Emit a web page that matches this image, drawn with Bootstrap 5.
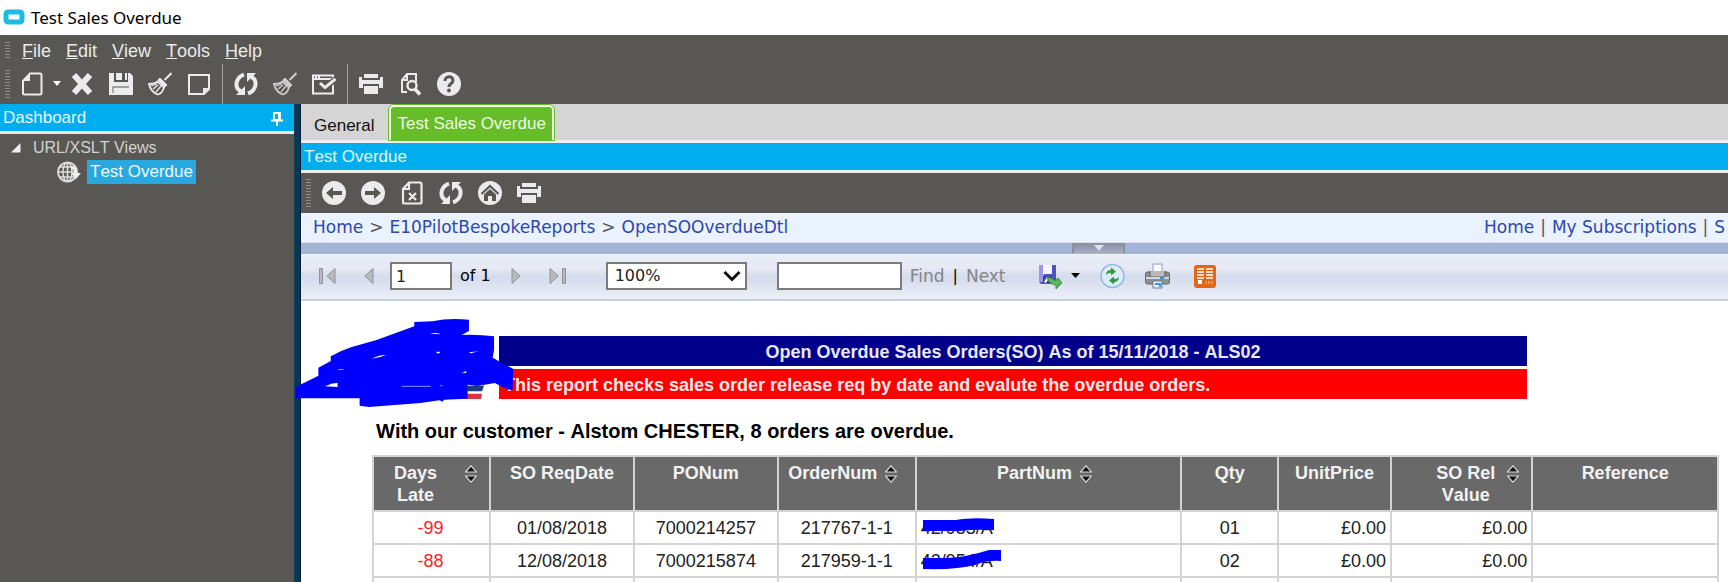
<!DOCTYPE html>
<html lang="en">
<head>
<meta charset="utf-8">
<meta name="viewport" content="width=device-width, initial-scale=1">
<title>Test Sales Overdue</title>
<link href="https://cdn.jsdelivr.net/npm/bootstrap@5.3.0/dist/css/bootstrap.min.css" rel="stylesheet">
<style>
:root{--slate:#585754;--azure:#00adef;--tip:#ebebeb}
body{font-family:"Liberation Sans",Arial,sans-serif;font-size:17px;line-height:20px;font-kerning:none;color:#000;background:#fff}
svg{display:block;flex:none}
.titlebar{height:35px;padding:0 0 0 3px;gap:6px;font:17px/36px "Noto Sans","Open Sans",sans-serif}
.titlebar h1{font:inherit;margin:0}
.chrome{background:var(--slate);color:var(--tip)}
.menubar{height:29px;padding:2px 0 0 5px;font-size:18px}
.menubar ul{padding-left:12px;gap:15px}
.menubar a{color:var(--tip);text-decoration:none}
.grip{width:5px;flex:none;background:repeating-linear-gradient(#8f8e8c 0 1px,transparent 1px 3px)}
.toolrow{height:40px;padding-left:5px}
.toolbtn{border:0;background:none;padding:0;width:24px;height:24px;color:var(--tip);flex:none}
.toolset{gap:15px;padding-left:11px}
.newgroup{gap:8px;margin-right:-6px}
.rule{width:1px;align-self:stretch;background:#a3a2a0;margin:0 -4px}
.sidebar{width:294px;background:var(--slate);flex:none}
.panelhead{height:30px;background:var(--azure);border-bottom:3px solid #ebebeb;color:#e9f6fd;padding:2px 3px 0;font-size:17px;margin:0;font-weight:400}
.divider{width:7px;flex:none;background:#033a5c;border-right:1px solid #001c2e;border-left:1px solid #17364a}
.tree{padding:2px 0 0 11px}
.tree .branch{color:#d2d2d0;gap:12px;height:24px;font-size:16px}
.tree .leaf{height:24px;gap:6px;padding-left:46px}
.tree a{background:#29a8e0;color:#f2faff;text-decoration:none;padding:0 3px;line-height:24px}
.tabstrip{height:39px;background:#d5d5d5;border-bottom:3px solid #f0f0f0;padding-left:13px;gap:15px}
.tabstrip button{border:0;background:none;padding:0;color:#111}
.tabstrip .current{color:#eefbe4;background:#66bc29;border:2px solid #f4fff0;border-bottom:0;border-radius:5px 5px 0 0;outline:1px solid #66bc29;padding:0 6px;height:35px;line-height:30px}
.crumbs{height:30px;background:#eaf2ff;border-bottom:1px solid #dde0ea;font:17px/29px "DejaVu Sans",sans-serif;padding-left:12px;color:#555}
.crumbs a{color:#2e47ad;text-decoration:none}
.crumbs>div{gap:6px}
.crumbs .right{width:244px;overflow:hidden}
.band{height:11px;background:#a4b4d7;padding-left:168px}
.fold{border:2px solid #8890a2;border-width:0 2px;background:linear-gradient(#868d9c,#a9afc0);width:53px;height:10px;padding:0}
.viewer{height:47px;border-top:1px solid #f4f3f0;border-bottom:2px solid #c6d1e8;background:linear-gradient(#e8edf6,#e7e9f4 30%,#d4dbeb 50%,#eaedf6 95%);padding:0 0 2px 14px;font:16px/20px "DejaVu Sans",sans-serif}
.viewer .box{height:28px;border:2px solid #7b7b7b;border-radius:0;background-color:#fff;padding:0 4px;font:16px/24px "DejaVu Sans",sans-serif;color:#222;flex:none}
.viewer select.box{appearance:none;width:141px;padding-left:7px;margin:0 30px 0 40px;background-image:url("data:image/svg+xml,%3Csvg xmlns='http://www.w3.org/2000/svg' width='18' height='12'%3E%3Cpath d='M1.500 2 9 9.500 16.500 2' fill='none' stroke='%23111' stroke-width='3'/%3E%3C/svg%3E");background-repeat:no-repeat;background-position:right 4px center}
.iconbtn{border:0;background:none;padding:0;flex:none}
.findbtn{border:0;background:none;padding:0;color:#858585;font-size:17px}
.report{padding:35px 9px 0 71px;font-size:18px}
.masthead{padding-right:192px}
.logo{width:127px;flex:none}
.bar{height:30px;color:#fff;font-weight:700;line-height:32px;font-size:18px}
.bar-title{background:#00008b;color:#e8e8f8;margin:0 0 3px}
.bar-note{background:red;padding-left:5px;color:#ffe9e9}
.scrawl{position:absolute;left:-6px;top:17px;width:220px;height:90px}
.headline{font-size:20px;font-weight:700;line-height:24px;margin:20px 0 12px 4px}
.orders{table-layout:fixed;width:100%;border-collapse:collapse}
.orders th,.orders td{border:2px solid #d3d3d3}
.orders th{background:#696969;color:#f2f2f2;height:55px;vertical-align:top;text-align:center;line-height:22px;padding:5px 4px 0}
.orders td{height:33px;padding:0 4px;line-height:30px;color:#222;text-align:center}
.orders td.num{text-align:right}
.orders td.late{color:#f22;padding-right:6px}
.orders td.part{text-align:left;position:relative}
.orders td.part svg{position:absolute;left:6px;top:4px}
.orders th>div{padding-right:8px}
.sorter{border:0;background:none;padding:3px 0 0;line-height:0}
</style>
</head>
<body class="vh-100 overflow-hidden d-flex flex-column">
<svg width="0" height="0" class="position-absolute" aria-hidden="true">
<symbol id="cycle" viewBox="0 0 24 24"><g fill="none" stroke="currentColor" stroke-width="4"><path d="M10 2.600C3 5 1 12 3.500 16.500L7 20"/><path d="M14 21.400c7-2.400 9-9.400 6.500-13.900L17 4"/></g><path fill="currentColor" d="M2 23h9V14zM22 1h-9v9z"/></symbol>
<symbol id="printer" viewBox="0 0 24 24"><g fill="currentColor"><path d="M5 2h14v4H5zM0 5h3v3h18V5h3v11h-4v-4H4v4H0z"/><path d="M5 14h14v8H5z"/></g></symbol>
<symbol id="broom" viewBox="0 0 24 24"><g fill="none" stroke="currentColor"><path d="m23.500 1-7 7" stroke-width="2"/><path d="m12 6 7 7-2 2-7-7z" fill="currentColor"/><path d="M9.500 9.500C7 12 4 12 1 12c1 5 4.500 9 9 10.500 3-1 5-3.500 6-7z" stroke-width="1.800"/><path d="m5 17 5-4M8 20l5-6M3 14l6-2" stroke-width="1.300"/></g></symbol>
<symbol id="sort" viewBox="0 0 12 18"><path d="M.5 7 6 .8 11.500 7zM.5 11 6 17.200 11.500 11z" fill="#111" stroke="#d8d8d8" stroke-width="1.200"/></symbol>
</svg>

<header class="titlebar d-flex flex-shrink-0">
<svg class="mt-2" width="22" height="18" viewBox="0 0 22 18"><rect x="3" y="4" width="16" height="10" rx="2" fill="#fff" stroke="#1fb9e6" stroke-width="5"/></svg>
<h1>Test Sales Overdue</h1>
</header>

<div class="chrome flex-shrink-0">
<nav class="menubar d-flex align-items-center"><span class="grip" style="height:17px"></span>
<ul class="list-unstyled d-flex mb-0">
<li><a href="#"><u>F</u>ile</a></li><li><a href="#"><u>E</u>dit</a></li><li><a href="#"><u>V</u>iew</a></li><li><a href="#"><u>T</u>ools</a></li><li><a href="#"><u>H</u>elp</a></li>
</ul></nav>
<div class="toolrow d-flex align-items-center"><span class="grip" style="height:29px"></span>
<div class="toolset d-flex align-items-center align-self-stretch">
<div class="newgroup d-flex align-items-center">
<button class="toolbtn" aria-label="New"><svg viewBox="0 0 24 24"><path d="M9 1.500h10c1 0 1.500.5 1.500 1.500v18c0 1-.5 1.500-1.500 1.500H3.500c-1 0-1.500-.5-1.500-1.500V9z" fill="none" stroke="currentColor" stroke-width="2"/><path d="M9 1.500V9H2z" fill="currentColor"/></svg></button>
<button class="iconbtn" aria-label="New options"><svg width="8" height="6" viewBox="0 0 8 6"><path d="M0 0h8L4 5z" fill="#fff"/></svg></button></div>
<button class="toolbtn" aria-label="Delete"><svg viewBox="0 0 24 24"><path d="m4 3 16 18M20 3 4 21" stroke="currentColor" stroke-width="6"/></svg></button>
<button class="toolbtn" aria-label="Save"><svg viewBox="0 0 24 24"><path fill="currentColor" d="M0 1h5v9h14V1h2l3 3v19H0zM7 1h6v7H7zM16 1h2v7h-2z"/><path d="M4 21v-6h16" fill="none" stroke="#888" stroke-width="1.300"/></svg></button>
<button class="toolbtn" aria-label="Clear"><svg viewBox="0 0 24 24"><use href="#broom"/></svg></button>
<button class="toolbtn" aria-label="Note"><svg viewBox="0 0 24 24"><path d="M2 3h20v14l-5 5H2z" fill="none" stroke="currentColor" stroke-width="2"/><path d="M16 22v-6h6z" fill="currentColor"/></svg></button>
<span class="rule"></span>
<button class="toolbtn" aria-label="Refresh"><svg viewBox="0 0 24 24"><use href="#cycle"/></svg></button>
<button class="toolbtn" aria-label="Clear all"><svg viewBox="0 0 24 24" opacity=".8"><use href="#broom"/></svg></button>
<button class="toolbtn" aria-label="Validate"><svg viewBox="0 0 24 24"><path d="M1 3.500h20v18H1zM1 7h20M4 3v4M7 3v4" fill="none" stroke="currentColor" stroke-width="2"/><path d="m8 12 5 4L23.500 7" fill="none" stroke="var(--slate)" stroke-width="6"/><path d="m8 11 5 4.500L23.500 7" fill="none" stroke="currentColor" stroke-width="3"/></svg></button>
<span class="rule"></span>
<button class="toolbtn" aria-label="Print"><svg viewBox="0 0 24 24"><use href="#printer"/></svg></button>
<button class="toolbtn" aria-label="Preview"><svg viewBox="0 0 24 24"><path d="M9 20H4V8l5-6h9v8M9 2v6H4" fill="none" stroke="currentColor" stroke-width="2"/><circle cx="14" cy="13.500" r="4.500" fill="none" stroke="currentColor" stroke-width="2.400"/><path d="m17 17 5 5.500" stroke="currentColor" stroke-width="3.500"/></svg></button>
<button class="toolbtn" aria-label="Help"><svg viewBox="0 0 24 24"><circle cx="12" cy="12" r="12" fill="currentColor"/><path d="M8 9c0-5.500 8-5.500 8-.5 0 3-4 3-4 6.500" fill="none" stroke="var(--slate)" stroke-width="3"/><circle cx="12" cy="18.500" r="1.900" fill="var(--slate)"/></svg></button>
</div></div>
</div>

<div class="d-flex flex-grow-1" style="min-height:0">
<aside class="sidebar">
<h2 class="panelhead d-flex align-items-center justify-content-between"><span>Dashboard</span>
<button class="iconbtn me-2" aria-label="Pin"><svg width="12" height="14" viewBox="0 0 12 14"><path d="M3 1h6v7H3zM0 8.500h12M6 9v5M8 1v7" fill="none" stroke="#fff" stroke-width="1.800"/></svg></button></h2>
<div class="tree">
<div class="branch d-flex align-items-center"><svg width="10" height="10" viewBox="0 0 10 10"><path d="M9.500 0v9.500H0z" fill="#eee"/></svg><span>URL/XSLT Views</span></div>
<div class="leaf d-flex align-items-center"><svg width="24" height="22" viewBox="0 0 24 22"><circle cx="10.500" cy="11" r="9.500" fill="none" stroke="#ddd" stroke-width="2"/><ellipse cx="10.500" cy="11" rx="4.500" ry="9.500" fill="none" stroke="#ddd" stroke-width="1.500"/><path d="M1 11h19M3 6h15M3 16h14M10.500 1v20" stroke="#ddd" stroke-width="1.600"/><path d="M14 5c5 0 6 3 6 7h4l-5 6-5-6h3c0-3-1-4-3-4z" fill="#eee"/></svg><a href="#">Test Overdue</a></div>
</div>
</aside>
<div class="divider"></div>
<main class="flex-grow-1 bg-white" style="min-width:0">
<div class="tabstrip d-flex align-items-end" role="tablist">
<button role="tab" class="pb-1">General</button><button role="tab" class="current" aria-selected="true">Test Sales Overdue</button>
</div>
<h2 class="panelhead d-flex align-items-center">Test Overdue</h2>
<div class="chrome toolrow d-flex align-items-center"><span class="grip" style="height:29px"></span>
<div class="toolset d-flex">
<button class="toolbtn" aria-label="Back"><svg viewBox="0 0 24 24"><circle cx="12" cy="12" r="12" fill="currentColor"/><path d="M4 12l7-6v4h9v4h-9v4z" fill="var(--slate)"/></svg></button>
<button class="toolbtn" aria-label="Forward"><svg viewBox="0 0 24 24"><circle cx="12" cy="12" r="12" fill="currentColor"/><path d="M20 12l-7-6v4H4v4h9v4z" fill="var(--slate)"/></svg></button>
<button class="toolbtn" aria-label="Stop"><svg viewBox="0 0 24 24"><path d="M9 1.500h11c1 0 1.500.5 1.500 1.500v18c0 1-.5 1.500-1.500 1.500H4.500c-1 0-1.500-.5-1.500-1.500V8zM9 2v6H3M9 12l7 7M16 12l-7 7" fill="none" stroke="currentColor" stroke-width="2.200"/></svg></button>
<button class="toolbtn" aria-label="Reload"><svg viewBox="0 0 24 24"><use href="#cycle"/></svg></button>
<button class="toolbtn" aria-label="Home page"><svg viewBox="0 0 24 24"><circle cx="12" cy="12" r="12" fill="currentColor"/><path d="m3.500 13 8.500-8 8.500 8" fill="none" stroke="var(--slate)" stroke-width="2.200"/><path d="m6 13.500 6-5.500 6 5.500V20h-4v-5h-4v5H6z" fill="var(--slate)"/></svg></button>
<button class="toolbtn" aria-label="Print page"><svg viewBox="0 0 24 24"><use href="#printer"/></svg></button>
</div></div>

<nav class="crumbs d-flex justify-content-between text-nowrap">
<div class="d-flex"><a href="#">Home</a><span>&gt;</span><a href="#">E10PilotBespokeReports</a><span>&gt;</span><a href="#">OpenSOOverdueDtl</a></div>
<div class="right d-flex"><a href="#">Home</a><span>|</span><a href="#">My Subscriptions</a><span>|</span><a href="#">S</a></div>
</nav>
<div class="band d-flex justify-content-center"><button class="fold" aria-label="Collapse"><svg class="mx-auto" width="10" height="6" viewBox="0 0 10 6"><path d="M0 0h10L5 6z" fill="#dce3f0"/></svg></button></div>

<div class="viewer d-flex align-items-center">
<button class="iconbtn ms-1" aria-label="First page"><svg width="17" height="18" viewBox="0 0 17 18"><path d="M.5 1.500h3v15h-3zM16 1.500v15L8 9z" fill="#b7b9bd" stroke="#909297"/></svg></button>
<button class="iconbtn ms-4 ps-1" aria-label="Previous page"><svg width="10" height="18" viewBox="0 0 10 18"><path d="M9 1.500v15L1 9z" fill="#b7b9bd" stroke="#909297"/></svg></button>
<input class="box ms-3 me-2" style="width:62px" value="1" aria-label="Page">
<span>of 1</span>
<button class="iconbtn ms-3 ps-1" aria-label="Next page"><svg width="10" height="18" viewBox="0 0 10 18"><path d="M1 1.500v15L9 9z" fill="#b7b9bd" stroke="#909297"/></svg></button>
<button class="iconbtn ms-4 ps-1" aria-label="Last page"><svg width="17" height="18" viewBox="0 0 17 18"><path d="M13.500 1.500h3v15h-3zM1 1.500v15L9 9z" fill="#b7b9bd" stroke="#909297"/></svg></button>
<select class="box" aria-label="Zoom"><option>100%</option></select>
<input class="box" style="width:125px" aria-label="Find text">
<button class="findbtn ms-2">Find</button><span class="ms-2">|</span><button class="findbtn ms-2">Next</button>
<button class="iconbtn ms-4 ps-2 d-flex align-items-center gap-2" aria-label="Export"><svg width="25" height="26" viewBox="0 0 25 26"><path d="M1 2h17v19H3l-2-2z" fill="#5152bd"/><path d="M1 2h5v17H1z" fill="#9998e6"/><path d="M5 2h9v9H5z" fill="#f4f6ff"/><path d="M5 13h9v7H5z" fill="#3a4390"/><path d="m6 19 3-5 2 1-3 5z" fill="#fff"/><path d="M9 15c3-1 5 0 8 3l3-3 4 5-6 6v-4c-4 0-7-3-9-7z" fill="#5bb563" stroke="#3d9149"/></svg><svg width="9" height="6" viewBox="0 0 9 6"><path d="M0 0h9L4.500 5z"/></svg></button>
<button class="iconbtn ms-3 ps-1" aria-label="Refresh report"><svg width="25" height="26" viewBox="0 0 25 26"><circle cx="12.500" cy="13" r="11.500" fill="#dcebfb" stroke="#8eb7e6" stroke-width="1.500"/><path d="M6 12c0-4 3-5 5-5V4.500l5 4-5 4V10c-2 0-3 0-5 2zM19 14c0 4-3 5-5 5v2.500l-5-4 5-4V16c2 0 3 0 5-2z" fill="#2d9b35"/></svg></button>
<button class="iconbtn ms-3 ps-1" aria-label="Print report"><svg width="25" height="26" viewBox="0 0 25 26"><path d="M8 1h9v9H8z" fill="#f8fbff" stroke="#8ba0bd"/><rect x=".5" y="9" width="24" height="12" rx="2" fill="#8d8f92" stroke="#65676a"/><path d="M5 8v6h15V8" fill="#b8babc" stroke="#55585c"/><path d="M1 15h23" stroke="#d8d9da" stroke-width="2"/><path d="M15 15h4" stroke="#338fe5" stroke-width="2"/><path d="M8 18h9v7H8z" fill="#e2f2ff" stroke="#6a7d93"/><path d="M10 21h5v3" fill="none" stroke="#3b98e6" stroke-width="2"/></svg></button>
<button class="iconbtn ms-3 ps-2" aria-label="Data feed"><svg width="22" height="23" viewBox="0 0 22 23"><rect width="22" height="23" rx="3" fill="#e2661a"/><path d="M3 4h7M3 7h7M3 10h7M3 13h7M12 4h7M12 7h7M12 10h7M12 13h7" stroke="#fff" stroke-width="1.500"/><rect x="4" y="15" width="4" height="4" fill="#fff"/><path d="M12 16v3M15 16v3M18 16v3" stroke="#f3a070" stroke-width="1.500"/></svg></button>
</div>

<section class="report position-relative">
<div class="masthead d-flex">
<div class="logo"></div>
<div class="flex-grow-1">
<h2 class="bar bar-title text-center">Open Overdue Sales Orders(SO) As of 15/11/2018 - ALS02</h2>
<div class="bar bar-note text-nowrap">This report checks sales order release req by date and evalute the overdue orders.</div>
</div></div>
<svg class="scrawl" viewBox="15 55 640 270" preserveAspectRatio="none" aria-hidden="true"><path d="M500 258h65l-6 17h-59z" fill="#1c3c7c"/><path d="M480 282h79l-3 16h-76z" fill="#d8343c"/><path fill="#00f" d="M17 262 83 228V204L119 184V170Q150 152 180 142L250 122 362 80V67L415 65Q460 55 521 60V94L500 106Q550 104 594 110V150L590 174 650 208 648 270Q635 274 597 250L545 259 517 255V297L448 300 445 306 435 302 380 310 230 322 203 318V296H17z"/><path fill="#fff" d="M408 102q16-5 32 2zM238 177q18-10 42-11-18 8-42 11zM427 156h9v5h-9zM522 158l28-3-25 6zM138 212q10-6 22-3zM102 260q22-11 37-10v12zM500 221l13-7v6z"/><path d="M325 260h85M436 258h8" stroke="#cde" stroke-width="2"/><path d="m571 145 5-3v8z" fill="#224"/></svg>
<h3 class="headline">With our customer - Alstom CHESTER, 8 orders are overdue.</h3>
<table class="orders">
<colgroup><col style="width:8.700%"><col style="width:10.700%"><col style="width:10.700%"><col style="width:10.250%"><col style="width:19.750%"><col style="width:7.200%"><col style="width:8.400%"><col style="width:10.500%"><col></colgroup>
<thead><tr>
<th><div class="d-flex justify-content-end align-items-start"><span>Days<br>Late</span><button class="sorter ms-4 ps-1" aria-label="Sort by days late"><svg width="12" height="18"><use href="#sort"/></svg></button></div></th>
<th>SO ReqDate</th><th>PONum</th>
<th><div class="d-flex justify-content-center align-items-start">OrderNum<button class="sorter ms-2" aria-label="Sort by order"><svg width="12" height="18"><use href="#sort"/></svg></button></div></th>
<th><div class="d-flex justify-content-center align-items-start">PartNum<button class="sorter ms-2" aria-label="Sort by part"><svg width="12" height="18"><use href="#sort"/></svg></button></div></th>
<th>Qty</th><th>UnitPrice</th>
<th><div class="d-flex justify-content-end align-items-start"><span>SO Rel<br>Value</span><button class="sorter ms-2 ps-1" aria-label="Sort by value"><svg width="12" height="18"><use href="#sort"/></svg></button></div></th>
<th>Reference</th></tr></thead>
<tbody>
<tr><td class="late">-99</td><td>01/08/2018</td><td>7000214257</td><td>217767-1-1</td><td class="part">42/953/A<svg width="80" height="24" viewBox="0 0 80 24" aria-hidden="true"><path d="M0 4h33q15-3 38-1v11q-22-1-34 1H0z" fill="#00f"/></svg></td><td>01</td><td class="num">£0.00</td><td class="num">£0.00</td><td></td></tr>
<tr><td class="late">-88</td><td>12/08/2018</td><td>7000215874</td><td>217959-1-1</td><td class="part">42/954/A<svg width="80" height="24" viewBox="0 0 80 24" aria-hidden="true"><path d="M0 9h24q20-1 42-8h12v11q-13-1-26 4-18 5-52 4z" fill="#00f"/></svg></td><td>02</td><td class="num">£0.00</td><td class="num">£0.00</td><td></td></tr>
<tr><td></td><td></td><td></td><td></td><td></td><td></td><td></td><td></td><td></td></tr>
</tbody></table>
</section>
</main>
</div>
<script src="https://cdn.jsdelivr.net/npm/bootstrap@5.3.0/dist/js/bootstrap.bundle.min.js"></script>
</body>
</html>
